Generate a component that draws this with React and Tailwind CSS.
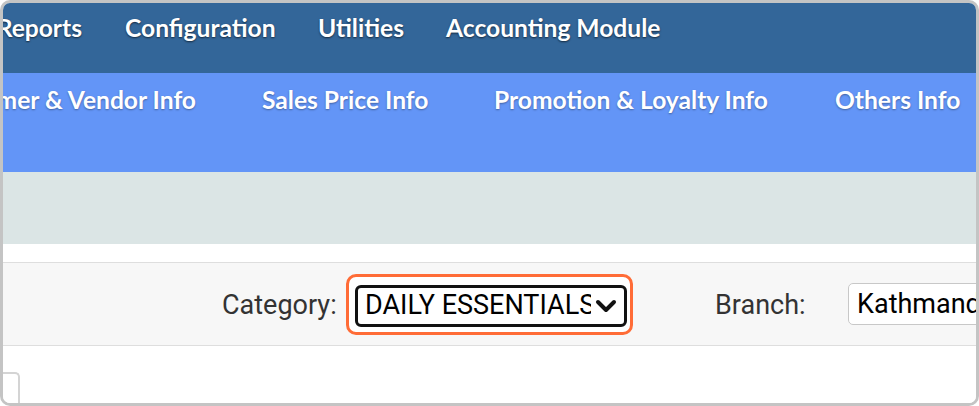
import React from "react";

const menuFont = { fontFamily: "Lato, 'Open Sans', sans-serif" };

export default function App() {
  return (
    <div className="w-[979px] h-[406px] border-[3px] border-[#c4c4c4] rounded-[10px] overflow-hidden bg-white flex flex-col">
      {/* Top nav */}
      <div
        className="h-[70px] shrink-0 bg-[#336699] flex items-start pt-[10px] text-white font-bold text-[24.6px] leading-[30px] [text-shadow:0_1px_2px_rgba(0,0,0,0.6)] whitespace-nowrap"
        style={menuFont}
      >
        <div className="w-[122px] shrink-0 flex justify-end pr-[43px] overflow-hidden">
          <span>Reports</span>
        </div>
        <div className="w-[193px] shrink-0">Configuration</div>
        <div className="w-[128px] shrink-0">Utilities</div>
        <div className="shrink-0">Accounting Module</div>
      </div>

      {/* Sub nav */}
      <div
        className="h-[99px] shrink-0 bg-[#6395f7] flex items-start pt-[12px] text-white font-bold text-[24.6px] leading-[30px] [text-shadow:0_1px_2px_rgba(0,0,0,0.35)] whitespace-nowrap"
        style={menuFont}
      >
        <div className="w-[259px] shrink-0 flex justify-end pr-[66px] overflow-hidden">
          <span>Customer &amp; Vendor Info</span>
        </div>
        <div className="w-[232px] shrink-0">Sales Price Info</div>
        <div className="w-[341px] shrink-0">Promotion &amp; Loyalty Info</div>
        <div className="shrink-0">Others Info</div>
      </div>

      {/* Grey band */}
      <div className="h-[72px] shrink-0 bg-[#dbe5e5]" />
      <div className="h-[18px] shrink-0 bg-white" />

      {/* Filter row */}
      <div
        className="h-[84px] shrink-0 bg-[#f7f7f7] border-y border-[#dedede] flex items-center pl-[219px] whitespace-nowrap"
        style={{ fontFamily: "Roboto, Arial, sans-serif" }}
      >
        <div className="w-[124px] shrink-0 text-[27px] text-[#333] pt-[2px]">Category:</div>
        <div className="w-[287px] h-[61px] shrink-0 border-[3px] border-[#ff6c37] rounded-[10px] bg-white pl-[6px] pt-[8px] pr-[3px] flex items-start">
          <div className="w-[272px] h-[42px] border-[3px] border-[#111] rounded-[6px] bg-white flex items-center pl-[7px] pr-[6px]">
            <div className="w-[226px] overflow-hidden text-[27px] text-black leading-none">DAILY ESSENTIALS</div>
            <svg width="24" height="24" viewBox="0 0 24 24" className="ml-[3px] shrink-0">
              <path d="M4 8 L12 16 L20 8" fill="none" stroke="#111" strokeWidth="4" strokeLinecap="round" strokeLinejoin="round" />
            </svg>
          </div>
        </div>
        <div className="ml-[82px] w-[133px] shrink-0 text-[27px] text-[#333] pt-[2px]">Branch:</div>
        <div className="w-[220px] h-[42px] shrink-0 border border-[#c8c8c8] rounded-[5px] bg-white flex items-center pl-[8px] text-[27px] text-black">
          Kathmandu
        </div>
      </div>

      {/* Bottom area */}
      <div className="flex-1 bg-white pt-[26px]">
        <div className="w-[17px] h-[40px] border-t-2 border-r-2 border-[#d4d4d4] rounded-tr-[5px]" />
      </div>
    </div>
  );
}
